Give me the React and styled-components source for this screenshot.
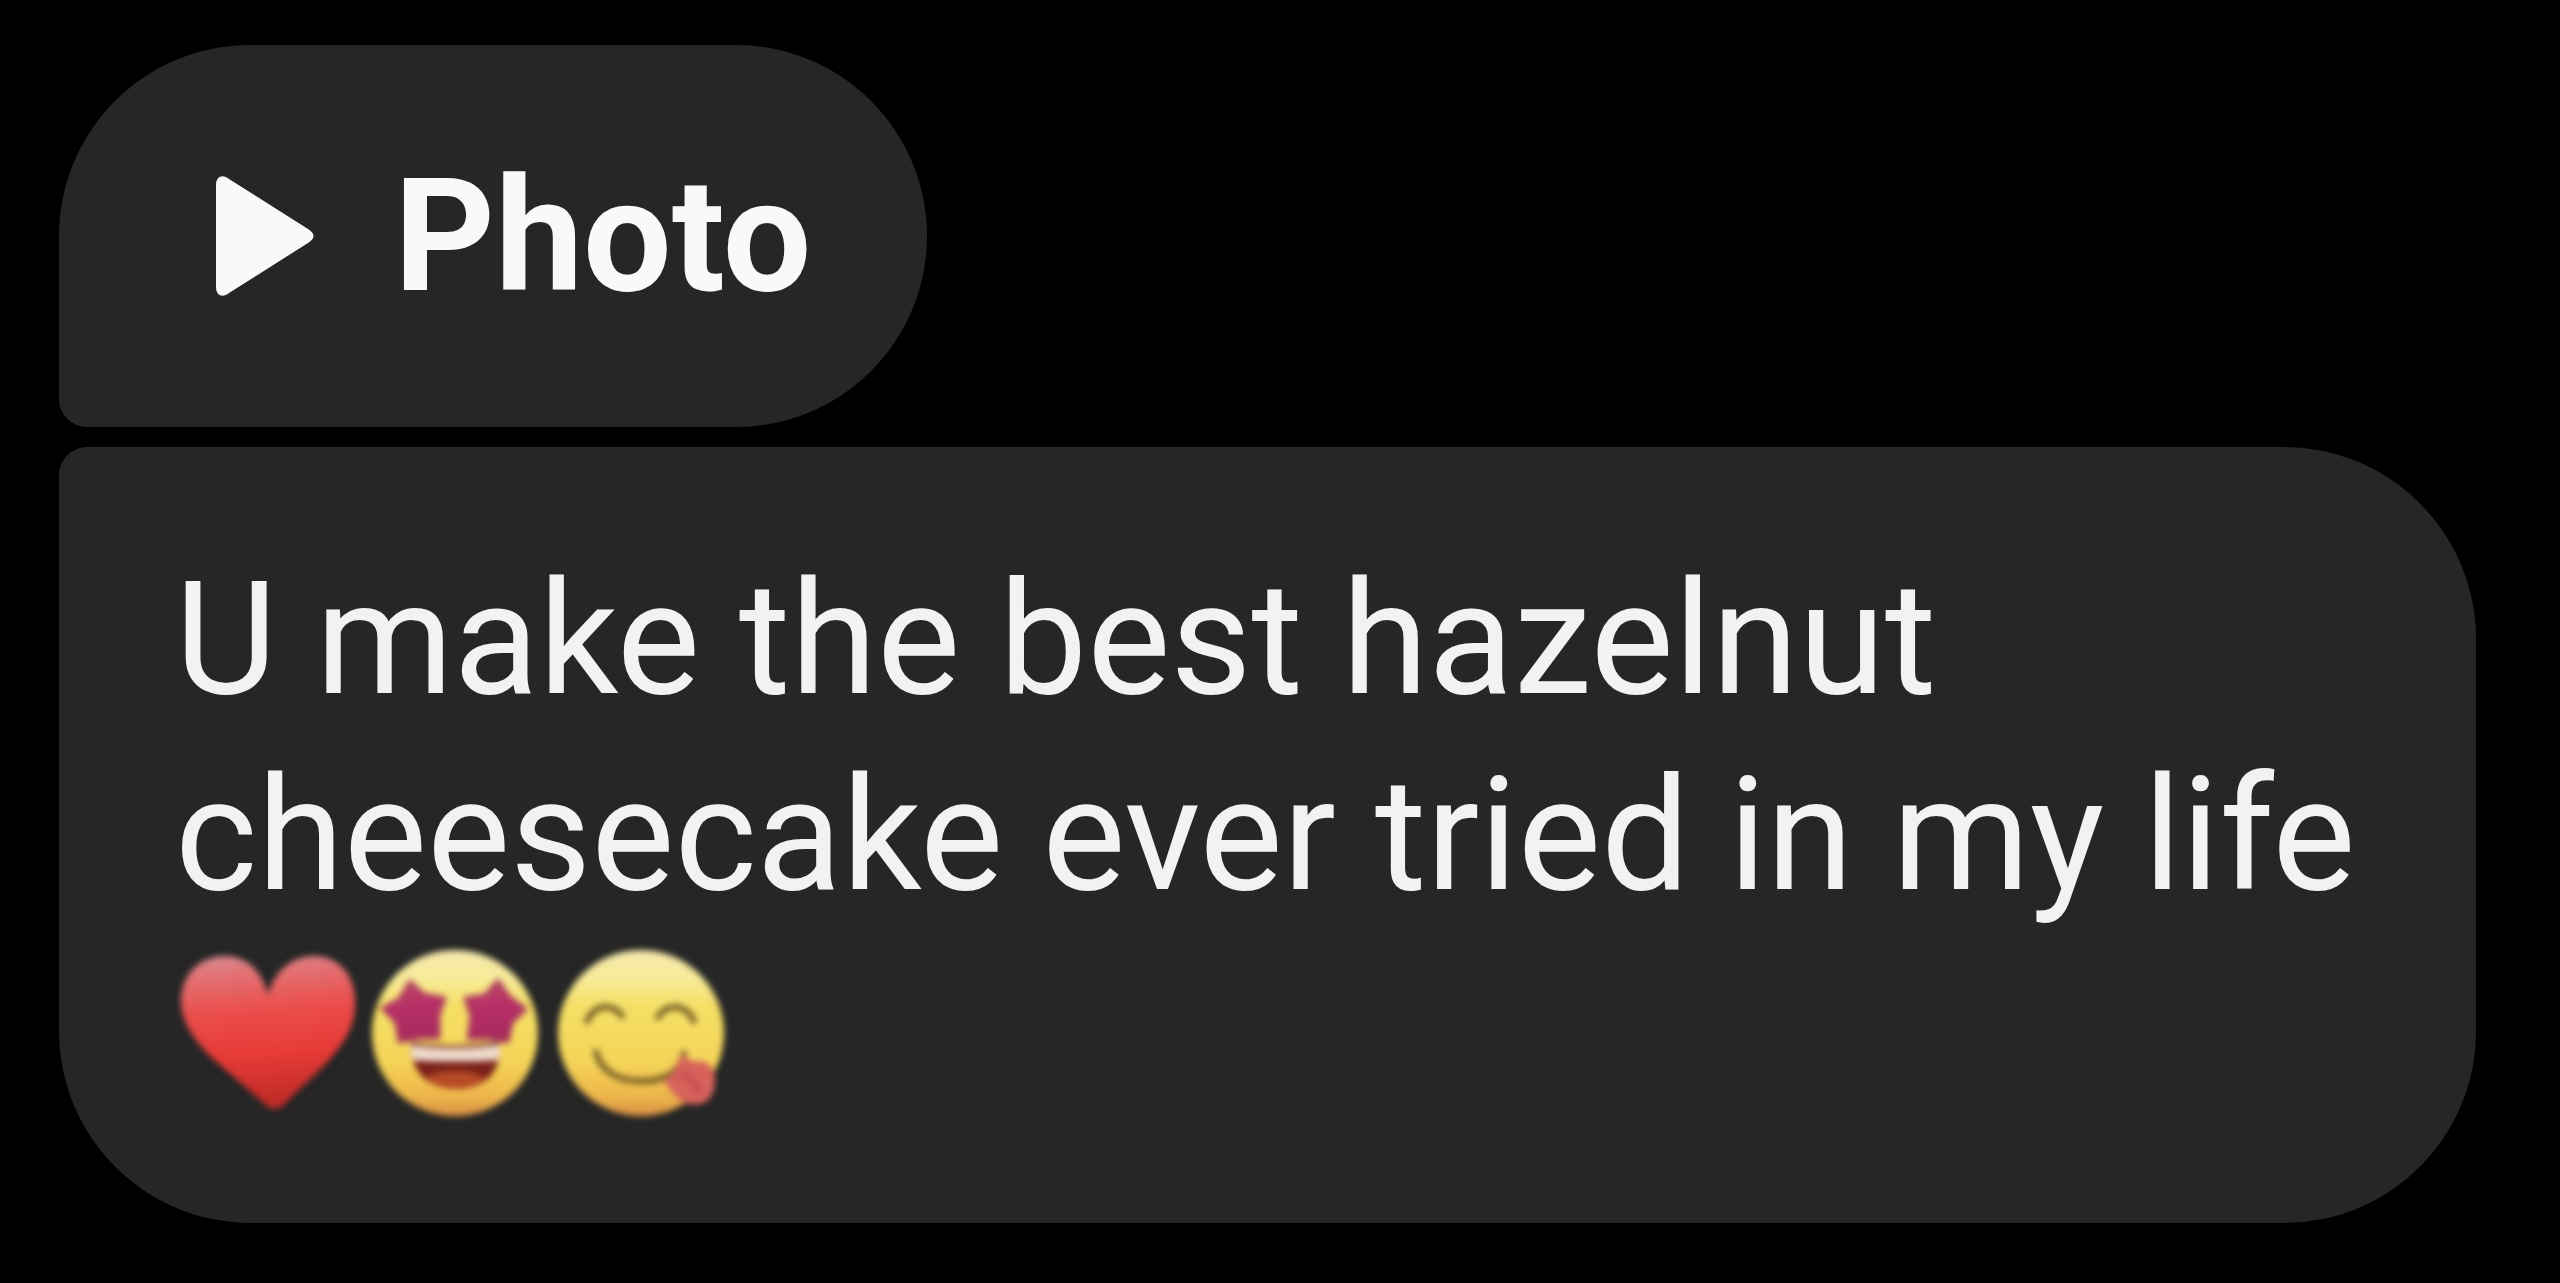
import React from "react";
import styled, { createGlobalStyle } from "styled-components";

const GlobalStyle = createGlobalStyle`
  *, *::before, *::after { box-sizing: border-box; }
  body {
    margin: 0;
    background: #000;
    color: #f2f2f2;
    font-family: Roboto, "Liberation Sans", sans-serif;
  }
`;

const Thread = styled.main`
  display: flex;
  flex-direction: column;
  align-items: flex-start;
  gap: 20px;
  min-height: 100vh;
  padding: 45px 84px 60px 59px;
`;

const corners = {
  first: "192px 192px 192px 28px",
  last: "28px 192px 192px 192px",
};

const Bubble = styled.div`
  border: 0;
  border-radius: ${(p) => corners[p.$position]};
  background: #262626;
  color: inherit;
  font-family: inherit;
  font-size: 157px;
  line-height: 196px;
  text-align: left;
  padding: 94px 108px 94px 116px;
`;

const PhotoBubble = styled(Bubble)`
  display: flex;
  align-items: center;
  gap: 80px;
  color: #f9f9f9;
  font-weight: 700;
  padding: 93px 116px 93px 156px;
  cursor: pointer;
`;

const PlayIcon = styled.svg`
  display: block;
  flex: none;
  width: 99px;
  height: 120px;
`;

const Message = styled.p`
  margin: 0;
`;

const Reactions = styled.span`
  display: inline-flex;
  vertical-align: top;
`;

const Emoji = styled.svg`
  display: block;
  width: 187px;
  height: 196px;
  filter: blur(3px);
`;

function Heart() {
  return (
    <Emoji viewBox="0 0 187 196" role="img" aria-label="Red heart">
      <defs>
        <linearGradient id="heart" x1="0" y1="0" x2="0.1" y2="1">
          <stop offset="0" stopColor="#d68d95" />
          <stop offset="0.14" stopColor="#e27375" />
          <stop offset="0.4" stopColor="#eb4d4b" />
          <stop offset="0.68" stopColor="#e73b37" />
          <stop offset="1" stopColor="#c02b27" />
        </linearGradient>
      </defs>
      <path
        fill="url(#heart)"
        d="M93 62C87 38 72 23 50 23C24 23 6 42 6 68C6 90 22 112 43 130C62 147 78 160 89 171Q100 181 111 170C124 155 145 139 160 120C174 102 181 88 180 66C179 41 163 23 139 23C116 23 99 39 93 62Z"
      />
    </Emoji>
  );
}

function FaceFill({ id }) {
  return (
    <linearGradient id={id} x1="0" y1="0" x2="0" y2="1">
      <stop offset="0" stopColor="#f5e8ad" />
      <stop offset="0.16" stopColor="#f8ec9b" />
      <stop offset="0.34" stopColor="#f5df66" />
      <stop offset="0.68" stopColor="#f4d458" />
      <stop offset="0.88" stopColor="#eeb64b" />
      <stop offset="1" stopColor="#d99145" />
    </linearGradient>
  );
}

function StarStruck() {
  return (
    <Emoji viewBox="0 0 187 196" role="img" aria-label="Star-struck face">
      <defs>
        <FaceFill id="starFace" />
        <linearGradient id="star" x1="0" y1="0" x2="0.2" y2="1">
          <stop offset="0" stopColor="#b94d61" />
          <stop offset="0.5" stopColor="#b82f68" />
          <stop offset="1" stopColor="#a62a5c" />
        </linearGradient>
        <clipPath id="mouth">
          <path d="M48 111Q93 119 138 109Q140 155 93 156Q50 154 48 111Z" />
        </clipPath>
      </defs>
      <circle cx="93" cy="100" r="83" fill="url(#starFace)" />
      <g fill="url(#star)" stroke="#ad3c5c" strokeWidth="3" strokeLinejoin="round">
        <path d="M48 48L62 61L83 65L77 82L77 105L56 105L37 109L34 90L20 75L37 66Z" />
        <path d="M136 47L148 64L164 76L150 90L146 109L126 105L106 106L109 84L103 65L123 62Z" />
      </g>
      <g clipPath="url(#mouth)">
        <path fill="#7a2119" d="M40 100H145V160H40Z" />
        <ellipse cx="93" cy="152" rx="33" ry="14" fill="#b64a26" />
        <path fill="#efdacb" d="M44 112Q93 120 142 111V127Q93 130 44 127Z" />
      </g>
      <path d="M49 110Q93 117 137 109" fill="none" stroke="#9a6248" strokeWidth="3" />
    </Emoji>
  );
}

function SavoringFood() {
  return (
    <Emoji viewBox="0 0 187 196" role="img" aria-label="Face savoring food">
      <defs>
        <FaceFill id="yumFace" />
      </defs>
      <circle cx="92" cy="100" r="83" fill="url(#yumFace)" />
      <g fill="none" stroke="#796025" strokeWidth="6" strokeLinecap="round">
        <path d="M38 88Q45 74 56 74Q67 74 73 83" />
        <path d="M109 84Q115 74 126 74Q138 74 145 88" />
        <path d="M47 119C51 136 67 148 91 148C116 149 132 138 135 120" />
      </g>
      <path
        fill="#d7625b"
        d="M132 120Q139 130 153 128Q164 131 166 143C167 157 161 170 150 171C137 174 124 164 115 147Q129 138 132 120Z"
      />
      <path
        d="M133 141Q145 145 150 159"
        fill="none"
        stroke="#c64754"
        strokeWidth="5"
        strokeLinecap="round"
      />
    </Emoji>
  );
}

export default function App() {
  return (
    <>
      <GlobalStyle />
      <Thread>
        <PhotoBubble as="button" type="button" $position="first">
          <PlayIcon viewBox="0 0 99 120" aria-hidden="true">
            <path
              fill="currentColor"
              d="M1 9C1 0 8-2 14 3L93 53Q104 60 93 67L14 117C8 122 1 120 1 111Z"
            />
          </PlayIcon>
          Photo
        </PhotoBubble>
        <Bubble $position="last">
          <Message>
            U make the best hazelnut cheesecake ever tried in my life{" "}
            <Reactions>
              <Heart />
              <StarStruck />
              <SavoringFood />
            </Reactions>
          </Message>
        </Bubble>
      </Thread>
    </>
  );
}
